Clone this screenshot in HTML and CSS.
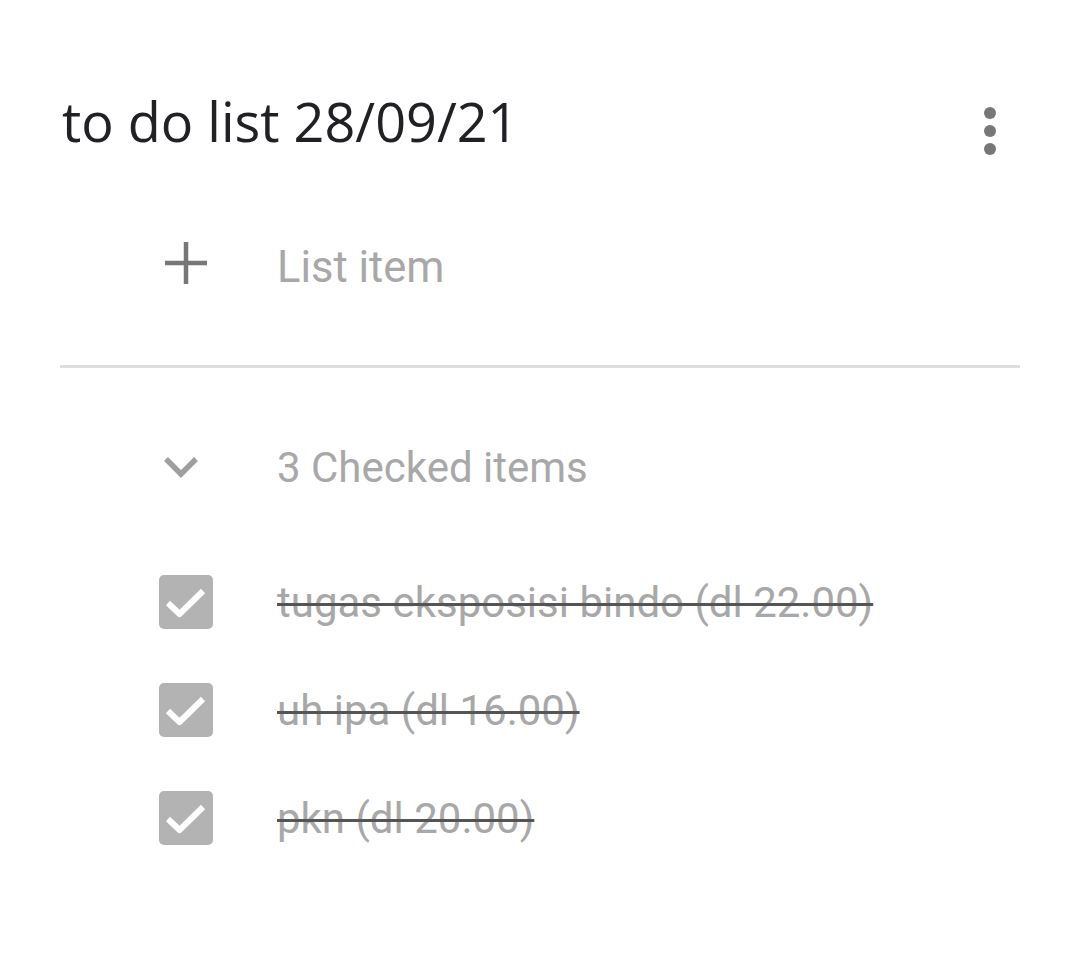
FILE: index.html
```html
<!DOCTYPE html>
<html lang="id">
<head>
    <meta charset="UTF-8">
    <meta name="viewport" content="width=device-width, initial-scale=1.0">
    <title>to do list 28/09/21</title>
    <link rel="stylesheet" href="styles.css">
</head>
<body>
    <div class="note">
        <!-- judul -->
        <div class="note-header">
            <h1 class="note-title">to do list 28/09/21</h1>
            <svg class="more-icon" viewBox="0 0 12 48" fill="currentColor">
                <circle cx="6" cy="6" r="6"></circle>
                <circle cx="6" cy="24" r="6"></circle>
                <circle cx="6" cy="42" r="6"></circle>
            </svg>
        </div>

        <!-- item baru -->
        <div class="add-row">
            <svg class="row-icon add-icon" viewBox="0 0 42 42" fill="none" stroke="currentColor" stroke-width="4.5">
                <line x1="21" y1="0" x2="21" y2="42"></line>
                <line x1="0" y1="21" x2="42" y2="21"></line>
            </svg>
            <span class="placeholder">List item</span>
        </div>

        <div class="divider"></div>

        <!-- item selesai -->
        <div class="checked-head">
            <svg class="row-icon chevron" viewBox="0 0 36 24" fill="none" stroke="currentColor" stroke-width="5.5">
                <polyline points="3 4 18 19 33 4"></polyline>
            </svg>
            <span class="checked-count">3 Checked items</span>
        </div>

        <ul class="checked-list">
            <li class="checked-item">
                <span class="checkbox">
                    <svg viewBox="0 0 54 54" fill="none" stroke="#fff" stroke-width="6" stroke-linejoin="round">
                        <polyline points="9 28 20.5 39 44 16"></polyline>
                    </svg>
                </span>
                <span class="item-text">tugas eksposisi bindo (dl 22.00)</span>
            </li>
            <li class="checked-item">
                <span class="checkbox">
                    <svg viewBox="0 0 54 54" fill="none" stroke="#fff" stroke-width="6" stroke-linejoin="round">
                        <polyline points="9 28 20.5 39 44 16"></polyline>
                    </svg>
                </span>
                <span class="item-text">uh ipa (dl 16.00)</span>
            </li>
            <li class="checked-item">
                <span class="checkbox">
                    <svg viewBox="0 0 54 54" fill="none" stroke="#fff" stroke-width="6" stroke-linejoin="round">
                        <polyline points="9 28 20.5 39 44 16"></polyline>
                    </svg>
                </span>
                <span class="item-text">pkn (dl 20.00)</span>
            </li>
        </ul>
    </div>
</body>
</html>
```

FILE: styles.css
```css
:root {
    --title-color: #202124;
    --icon-color: #777777;
    --muted-color: #a8a8a8;
    --strike-color: #555555;
    --box-color: #b3b3b3;
    --line-color: #dddddd;
}

* {
    margin: 0;
    padding: 0;
    box-sizing: border-box;
}

body {
    background: #ffffff;
    font-family: Roboto, 'Noto Sans', sans-serif;
    color: var(--title-color);
}

.note {
    padding: 86px 60px 0 60px;
}

.note-header {
    display: flex;
    justify-content: space-between;
    align-items: flex-start;
    padding-left: 2px;
    height: 124px;
}

.note-title {
    font-family: 'Open Sans', 'Noto Sans', sans-serif;
    font-weight: 400;
    font-size: 54px;
    line-height: 70px;
}

.more-icon {
    width: 12px;
    height: 48px;
    color: var(--icon-color);
    margin-top: 21px;
    margin-right: 24px;
}

.add-row {
    display: flex;
    align-items: center;
    height: 100px;
    margin-top: 3px;
    padding-left: 105px;
}

.row-icon {
    color: var(--icon-color);
    flex-shrink: 0;
}

.add-icon {
    width: 42px;
    height: 42px;
    margin-right: 70px;
}

.placeholder,
.checked-count {
    font-size: 42px;
    color: var(--muted-color);
}

.placeholder {
    font-size: 43.5px;
    padding-top: 9px;
}

.divider {
    height: 3px;
    background: var(--line-color);
    margin-top: 52px;
}

.checked-head {
    display: flex;
    align-items: center;
    height: 100px;
    margin-top: 49px;
    padding-left: 103px;
}

.chevron {
    width: 36px;
    height: 24px;
    color: #9e9e9e;
    margin-right: 78px;
}

.checked-list {
    list-style: none;
    margin-top: 31px;
}

.checked-item {
    display: flex;
    align-items: center;
    height: 108px;
    padding-left: 99px;
}

.checkbox {
    width: 54px;
    height: 54px;
    border-radius: 5px;
    background: var(--box-color);
    margin-right: 64px;
    flex-shrink: 0;
}

.checkbox svg {
    display: block;
    width: 54px;
    height: 54px;
}

.item-text {
    font-size: 42px;
    color: var(--muted-color);
    text-decoration: line-through;
    text-decoration-color: var(--strike-color);
    text-decoration-thickness: 3px;
}
```
